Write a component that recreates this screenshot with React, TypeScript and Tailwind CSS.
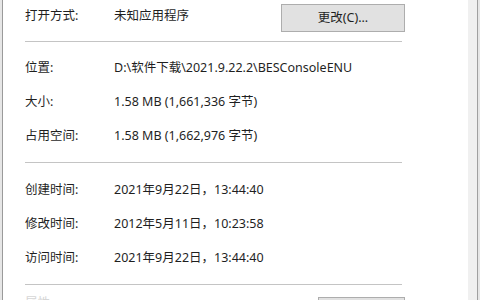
const rowsTop = [
  { label: '位置:', value: 'D:\\软件下载\\2021.9.22.2\\BESConsoleENU' },
  { label: '大小:', value: '1.58 MB (1,661,336 字节)' },
  { label: '占用空间:', value: '1.58 MB (1,662,976 字节)' },
];

const rowsTime = [
  { label: '创建时间:', value: '2021年9月22日，13:44:40' },
  { label: '修改时间:', value: '2012年5月11日，10:23:58' },
  { label: '访问时间:', value: '2021年9月22日，13:44:40' },
];

const Row = ({ label, value }: { label: string; value: string }) => (
  <div className="flex items-center h-[34px] shrink-0">
    <span className="w-[89px] shrink-0">{label}</span>
    <span className="whitespace-nowrap">{value}</span>
  </div>
);

const Divider = () => <div className="h-px w-[377px] shrink-0 bg-[#c4c4c4]" />;

const App = () => {
  return (
    <div
      className="flex w-[480px] h-[300px] overflow-hidden bg-white text-[12.5px] text-[#1f1f1f]"
      style={{ fontFamily: '"Noto Sans", "Noto Sans CJK SC", sans-serif' }}
    >
      {/* left window edge */}
      <div className="w-[2px] bg-[#e6e6e6]" />
      <div className="w-px bg-[#9a9a9a]" />

      {/* dialog body */}
      <div className="flex-1 flex flex-col pl-[22px] pr-[63px]">
        <div className="flex items-start h-[41px] shrink-0">
          <span className="w-[89px] shrink-0 mt-[7px]">打开方式:</span>
          <span className="mt-[7px]">未知应用程序</span>
          <button className="ml-auto mt-[4px] w-[124px] h-[28px] bg-[#e1e1e1] border border-[#adadad] flex items-center justify-center">
            更改(C)...
          </button>
        </div>
        <Divider />

        <div className="flex flex-col shrink-0 mt-[9px] mb-[9px]">
          {rowsTop.map((r) => (
            <Row key={r.label} {...r} />
          ))}
        </div>
        <Divider />

        <div className="flex flex-col shrink-0 mt-[10px] mb-[9px]">
          {rowsTime.map((r) => (
            <Row key={r.label} {...r} />
          ))}
        </div>
        <Divider />

        <div className="flex items-start shrink-0 mt-[9px]">
          <span className="w-[89px] shrink-0 text-[#d6d6d6]">属性:</span>
          <div className="ml-auto mt-[3px] w-[87px] h-[28px] bg-[#e1e1e1] border border-[#adadad]" />
        </div>
      </div>

      {/* right scroll strip */}
      <div className="w-[9px] bg-[#f0f0f0]" />
      <div className="w-px bg-[#a0a0a0]" />
      <div className="w-[2px] bg-[#e6e6e6]" />
    </div>
  );
};

export default App;
